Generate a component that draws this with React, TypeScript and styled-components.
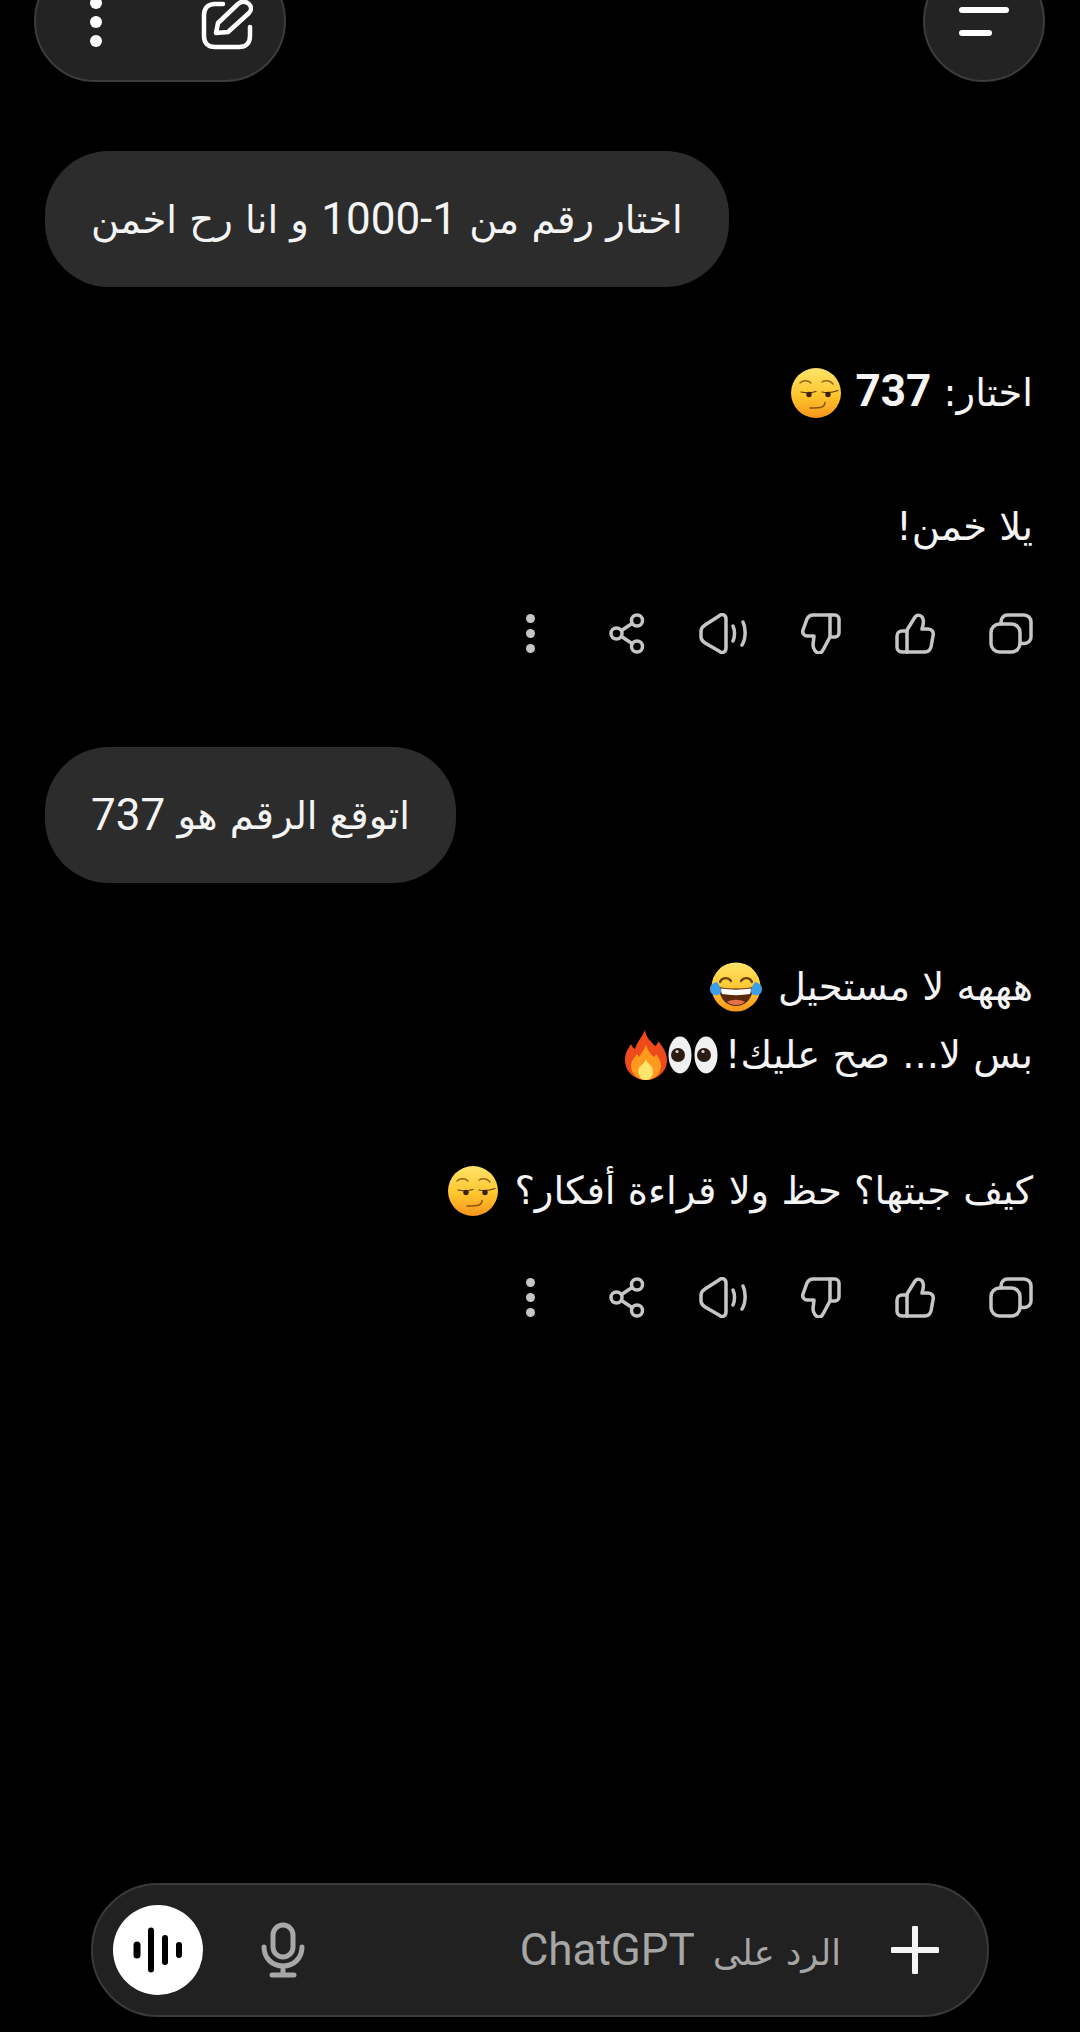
import React from "react";
import styled, { createGlobalStyle } from "styled-components";

const GlobalStyle = createGlobalStyle`
  html, body {
    margin: 0;
    padding: 0;
    background: #000;
  }
`;

const FaceGradient = ({ id }: { id: string }) => (
  <defs>
    <linearGradient id={id} x1="0" y1="0" x2="0" y2="1">
      <stop offset="0%" stopColor="#ffe36a" />
      <stop offset="55%" stopColor="#ffc62e" />
      <stop offset="100%" stopColor="#f7941d" />
    </linearGradient>
  </defs>
);

const SmirkEmoji = ({ id, gap }: { id: string; gap: number }) => (
  <EmojiSvg $size={50} $gap={gap} viewBox="0 0 50 50">
    <FaceGradient id={id} />
    <circle cx="25" cy="25" r="25" fill={`url(#${id})`} />
    <path d="M9 15c3-3 8-3 11 0M31 14c3-2 8-2 11 2" fill="none" stroke="#9a6418" strokeWidth="1.500" strokeLinecap="round" />
    <path d="M10 24c4 1 10 1 15-.5M31 24c5 1 11 .5 16-1.500" fill="none" stroke="#5a3610" strokeWidth="1.200" strokeLinecap="round" />
    <circle cx="18" cy="26.500" r="2.700" fill="#3a220a" />
    <circle cx="37" cy="26.500" r="2.700" fill="#3a220a" />
    <path d="M19 40c4 0 9 0 12-1 2-1 3-2.500 3-4.500" fill="none" stroke="#8a5512" strokeWidth="1.500" strokeLinecap="round" />
  </EmojiSvg>
);

const JoyEmoji = () => (
  <EmojiSvg $size={52} $gap={4} viewBox="0 0 52 50">
    <FaceGradient id="joyFace" />
    <circle cx="26" cy="25" r="24.500" fill="url(#joyFace)" />
    <path d="M10 20c2-5 8-5 11-1M31 19c3-4 9-4 11 1" fill="none" stroke="#6b4212" strokeWidth="2.200" strokeLinecap="round" />
    <path d="M9 25c11 2 23 2 34 0 0 11-7 19-17 19S9 36 9 25z" fill="#5b2a0e" />
    <path d="M11 26.500c10 1.500 20 1.500 30 0 0 2-.5 4-1 5.500-9 1.500-19 1.500-28 0-.5-1.500-1-3.500-1-5.500z" fill="#fff" />
    <path d="M17 40c5-3 13-3 18 0-5 4-13 4-18 0z" fill="#e8704a" />
    <path d="M0 27c0-4 3-6 7-7 2 3 4 6 4 9 0 3-3 5-6 4-3 0-5-3-5-6z" fill="#3d9fe8" />
    <path d="M52 27c0-4-3-6-7-7-2 3-4 6-4 9 0 3 3 5 6 4 3 0 5-3 5-6z" fill="#3d9fe8" />
  </EmojiSvg>
);

const EyesEmoji = () => (
  <EmojiSvg $size={50} $gap={-5} viewBox="0 0 50 38">
    <ellipse cx="12" cy="19" rx="11.500" ry="18.500" fill="#f0f0f0" />
    <ellipse cx="38" cy="19" rx="11.500" ry="18.500" fill="#f0f0f0" />
    <circle cx="10" cy="19" r="7" fill="#2a1c12" />
    <circle cx="36" cy="19" r="7" fill="#2a1c12" />
    <circle cx="9" cy="15.500" r="1.600" fill="#d8d8d8" />
    <circle cx="35" cy="15.500" r="1.600" fill="#d8d8d8" />
  </EmojiSvg>
);

const FireEmoji = () => (
  <EmojiSvg $size={44} $gap={0} viewBox="0 0 44 50">
    <path d="M21 0c1 8 6 11 10 16 2-1 3-3 3-5 5 6 9 12 9 19 0 12-10 20-21 20S1 42 1 30c0-7 3-11 6-16 1 2 2 4 4 5 2-7 7-12 10-19z" fill="#ee4a1c" />
    <path d="M22 14c1 6 4 9 8 13 1-1 2-2 2-3 3 4 5 8 5 12 0 8-7 14-15 14S7 44 7 36c0-5 3-8 6-12 1 1 1 2 2 3 2-4 6-8 7-13z" fill="#ff9a1f" />
    <path d="M22 29c1 4 4 5 6 8 2 4 1 13-6 13s-9-8-7-12c1-3 6-4 7-9z" fill="#ffe56b" />
  </EmojiSvg>
);

const CopyIcon = () => (
  <ActionSvg $w={44} viewBox="0 0 44 41">
    <rect x="2" y="11" width="29" height="28" rx="8.500" />
    <path d="M12 11V8.500A6.500 6.500 0 0 1 18.500 2H35a7 7 0 0 1 7 7v15a6.500 6.500 0 0 1-6.500 6.500H31" />
  </ActionSvg>
);

const ThumbUpIcon = () => (
  <ActionSvg $w={40} viewBox="0 0 40 41">
    <path d="M12 39V17L20 4C22 1 27 2 28 6C29 9 28 13 27 16H33C37 16 39 19 38 23L36 34C35 37 33 39 30 39Z" />
    <path d="M12 18H7C4 18 2 20 2 23V34C2 37 4 39 7 39H12" />
  </ActionSvg>
);

const ThumbDownIcon = () => (
  <ActionSvg $w={40} viewBox="0 0 40 41">
    <path d="M29 2H12C9 2 7 4 6 6L2 17C1 20 3 23 6 23H13L12 32C12 36 15 40 18 40C20 40 21 39 22 37L29 24Z" />
    <path d="M29 2H34C36 2 38 4 38 6V20C38 22 36 24 34 24H29" />
  </ActionSvg>
);

const SpeakerIcon = () => (
  <ActionSvg $w={48} viewBox="0 0 48 41">
    <path d="M27 6C27 2 23 0 20 3L6 12C3 14 2 15 2 18V24C2 27 3 28 6 30L20 38C23 41 27 39 27 35Z" />
    <path d="M34 13C36 17 36 24 34 28M44 9C47 15 47 26 43 32" />
  </ActionSvg>
);

const ShareIcon = () => (
  <ActionSvg $w={36} viewBox="0 0 36 40">
    <circle cx="28" cy="7" r="5.500" />
    <circle cx="7.500" cy="20" r="5.500" />
    <circle cx="28" cy="33" r="5.500" />
    <path d="M12.500 17L23 10M12.500 23L23 30" />
  </ActionSvg>
);

const Dots = () => (
  <DotColumn>
    <Dot />
    <Dot />
    <Dot />
  </DotColumn>
);

const ActionBar = () => (
  <Actions>
    <CopyIcon />
    <ThumbUpIcon />
    <ThumbDownIcon />
    <SpeakerIcon />
    <ShareIcon />
    <Dots />
  </Actions>
);

export default function App() {
  return (
    <>
      <GlobalStyle />
      <Page dir="rtl">
        <TopBar>
          <MenuPill>
            <Burger viewBox="0 0 50 30">
              <path d="M3 3h44M3 26h27" />
            </Burger>
          </MenuPill>
          <ToolPill>
            <svg width="52" height="50" viewBox="0 0 52 50" fill="none" stroke="#fff" strokeWidth="4.500" strokeLinecap="round" strokeLinejoin="round">
              <path d="M22 4H14C7 4 3 8 3 15V36C3 43 7 47 14 47H38C45 47 49 43 49 36V27" />
              <path d="M15 33L17 23L37 4C40 1 45 1 48 4C51 7 50 11 48 13L27 32Z" />
            </svg>
            <ToolDots>
              <WhiteDot />
              <WhiteDot />
              <WhiteDot />
            </ToolDots>
          </ToolPill>
        </TopBar>

        <UserBubble $top={69}>
          <span>اختار رقم من </span>
          <Num>1000-1</Num>
          <span> و انا رح اخمن</span>
        </UserBubble>

        <Reply $top={70}>
          <Line>
            اختار: <BoldNum>737</BoldNum> <SmirkEmoji id="smirkOne" gap={2} />
          </Line>
          <Line />
          <Line>يلا خمن!</Line>
        </Reply>
        <ActionBar />

        <UserBubble $top={93}>
          <span>اتوقع الرقم هو </span>
          <Num>737</Num>
        </UserBubble>

        <Reply $top={70}>
          <Line>
            هههه لا مستحيل <JoyEmoji />
          </Line>
          <Line>
            بس لا... صح عليك! <EyesEmoji />
            <FireEmoji />
          </Line>
          <Line />
          <Line>
            كيف جبتها؟ حظ ولا قراءة أفكار؟ <SmirkEmoji id="smirkTwo" gap={4} />
          </Line>
        </Reply>
        <ActionBar />

        <Composer>
          <PlusButton viewBox="0 0 48 48">
            <path d="M24 2v44M2 24h44" />
          </PlusButton>
          <Placeholder>
            الرد على <Latin>ChatGPT</Latin>
          </Placeholder>
          <MicIcon viewBox="0 0 44 56">
            <rect x="12" y="3" width="20" height="32" rx="10" />
            <path d="M3 25c0 11 8 19 19 19s19-8 19-19M22 44v8" />
            <path d="M11 53h22" />
          </MicIcon>
          <VoiceButton>
            <svg width="52" height="52" viewBox="0 0 52 52" stroke="#000" strokeLinecap="round" fill="none">
              <path d="M5 21v10" strokeWidth="7" />
              <path d="M19 6.500v39" strokeWidth="6" />
              <path d="M33 14v24" strokeWidth="6" />
              <path d="M47 21v10" strokeWidth="6" />
            </svg>
          </VoiceButton>
        </Composer>
      </Page>
    </>
  );
}

const Page = styled.div`
  width: 1080px;
  height: 2032px;
  overflow: hidden;
  background: #000;
  color: #f4f4f4;
  display: flex;
  flex-direction: column;
  font-family: "DejaVu Sans", Roboto, sans-serif;
  font-size: 38.5px;
`;

const TopBar = styled.div`
  display: flex;
  justify-content: space-between;
  height: 122px;
  margin-top: -40px;
  padding: 0 35px 0 34px;
  flex-shrink: 0;
`;

const MenuPill = styled.div`
  width: 122px;
  height: 122px;
  border-radius: 50%;
  background: #232323;
  border: 2px solid #3c3c3c;
  display: flex;
  justify-content: center;
  padding-top: 45px;
  box-sizing: border-box;
`;

const Burger = styled.svg`
  width: 50px;
  height: 30px;
  fill: none;
  stroke: #fff;
  stroke-width: 6px;
  stroke-linecap: round;
`;

const ToolPill = styled.div`
  width: 252px;
  height: 122px;
  border-radius: 61px;
  background: #232323;
  border: 2px solid #3c3c3c;
  display: flex;
  justify-content: space-between;
  padding: 38px 31px 0 54px;
  box-sizing: border-box;
`;

const ToolDots = styled.div`
  display: flex;
  flex-direction: column;
  gap: 7px;
  margin-top: -3px;
`;

const WhiteDot = styled.div`
  width: 12px;
  height: 12px;
  border-radius: 50%;
  background: #fff;
`;

const UserBubble = styled.div<{ $top: number }>`
  align-self: flex-end;
  height: 136px;
  margin: ${({ $top }) => $top}px 0 0 45px;
  padding: 0 46px;
  border-radius: 64px;
  background: #2c2c2c;
  display: flex;
  align-items: center;
  white-space: pre;
  flex-shrink: 0;
`;

const Num = styled.span`
  font-family: Roboto, sans-serif;
  font-size: 44px;
  direction: ltr;
  unicode-bidi: isolate;
`;

const BoldNum = styled.b`
  font-family: Roboto, sans-serif;
  font-size: 44px;
  font-weight: 700;
`;

const Latin = styled.span`
  font-family: Roboto, sans-serif;
  font-size: 44px;
  margin-right: 7px;
`;

const Reply = styled.div<{ $top: number }>`
  margin-top: ${({ $top }) => $top}px;
  padding: 0 47px;
  flex-shrink: 0;
`;

const Line = styled.div`
  height: 68px;
  line-height: 68px;
  white-space: nowrap;
`;

const EmojiSvg = styled.svg<{ $size: number; $gap: number }>`
  width: ${({ $size }) => $size}px;
  height: 50px;
  margin-right: ${({ $gap }) => $gap}px;
  vertical-align: -12px;
`;

const Actions = styled.div`
  display: flex;
  align-items: center;
  justify-content: flex-start;
  gap: 54px;
  height: 42px;
  margin-top: 51px;
  padding: 0 47px;
  flex-shrink: 0;
`;

const ActionSvg = styled.svg<{ $w: number }>`
  width: ${({ $w }) => $w}px;
  height: 41px;
  fill: none;
  stroke: #c6c6c6;
  stroke-width: 3.500px;
  stroke-linecap: round;
  stroke-linejoin: round;
  flex-shrink: 0;
`;

const DotColumn = styled.div`
  display: flex;
  flex-direction: column;
  gap: 6px;
  margin-right: 20px;
`;

const Dot = styled.div`
  width: 9px;
  height: 9px;
  border-radius: 50%;
  background: #c6c6c6;
`;

const Composer = styled.div`
  margin: auto 91px 15px 91px;
  height: 134px;
  box-sizing: border-box;
  border: 2px solid #3a3a3a;
  border-radius: 67px;
  background: #212121;
  display: flex;
  align-items: center;
  padding: 0 48px 0 20px;
  flex-shrink: 0;
`;

const PlusButton = styled.svg`
  width: 48px;
  height: 48px;
  fill: none;
  stroke: #f4f4f4;
  stroke-width: 6px;
  stroke-linecap: round;
  flex-shrink: 0;
`;

const Placeholder = styled.div`
  flex: 1;
  color: #a6a6a6;
  font-size: 35px;
  margin-right: 50px;
`;

const MicIcon = styled.svg`
  width: 44px;
  height: 56px;
  fill: none;
  stroke: #a8a8a8;
  stroke-width: 5px;
  stroke-linecap: round;
  flex-shrink: 0;
`;

const VoiceButton = styled.div`
  width: 90px;
  height: 90px;
  margin-right: 58px;
  border-radius: 50%;
  background: #fff;
  display: flex;
  align-items: center;
  justify-content: center;
  flex-shrink: 0;
`;
